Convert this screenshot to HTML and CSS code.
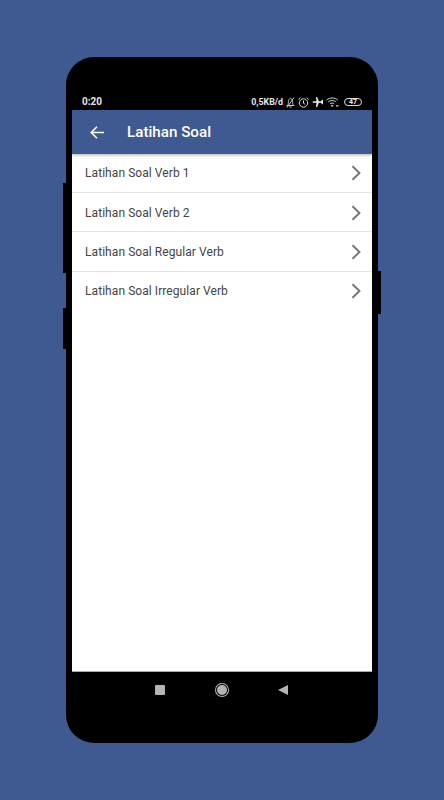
FILE: index.html
```html
<!DOCTYPE html>
<html>
<head>
	<title>Latihan Soal</title>
	<link rel="stylesheet" href="styles.css">
</head>
<body>
	<div class="phone">
		<span class="side-btn vol-up"></span>
		<span class="side-btn vol-down"></span>
		<span class="side-btn power"></span>

		<div class="status">
			<span class="clock">0:20</span>
			<div class="status-right">
				<span class="speed">0,5KB/d</span>
				<svg width="9" height="11" viewBox="0 0 9 11" fill="none" stroke="#ccc" stroke-width="1"><path d="M.5 8.500h8M1.600 8.500c.8-1 .7-2.500.8-3.800C2.500 3 3.300 1.500 4.500 1.500S6.500 3 6.600 4.700c.1 1.300 0 2.800.8 3.800M3.500 10h2M1 10.500 8 .5"/></svg>
				<svg width="11" height="11" viewBox="0 0 11 11" fill="none" stroke="#ddd" stroke-width="1"><circle cx="5.500" cy="6" r="4.200"/><path d="M5.500 3.500v2.800l1.600 1M.5 2.500 2.500.6M10.500 2.500 8.500.6"/></svg>
				<svg width="11" height="10" viewBox="0 0 11 10" fill="#eee"><path d="M0 5 1.500 4.300H4.500L4 0H5.200L6.800 4.300H9L10 2.800H11V7.200H10L9 5.700H6.800L5.200 10H4L4.500 5.700H1.500z"/></svg>
				<svg width="13" height="10" viewBox="0 0 13 10" fill="none" stroke="#ddd" stroke-width="1"><path d="M.6 3.200C3.800.2 8.600.2 11.800 3.200M2.300 5C4.500 3 7.900 3 10.100 5M4.100 6.800c1.300-1 2.900-1 4.200 0"/><path d="M5.200 8h2v1.500h-2zM10 8.200h2.400v1.300H10z" fill="#ddd" stroke="none"/></svg>
				<span class="battery">47</span>
			</div>
		</div>

		<div class="screen">
			<div class="appbar">
				<svg class="back" width="14" height="13" viewBox="0 0 14 13" fill="none" stroke="#fff" stroke-width="1.600"><path d="M14 6.500H1.500M7 .8 1.300 6.500 7 12.200"/></svg>
				<h1>Latihan Soal</h1>
			</div>
			<ul class="list">
				<li>Latihan Soal Verb 1<svg width="10" height="16" viewBox="0 0 10 16" fill="none" stroke="#757575" stroke-width="1.900"><path d="M1.500 1.200 8.500 8l-7 6.800"/></svg></li>
				<li>Latihan Soal Verb 2<svg width="10" height="16" viewBox="0 0 10 16" fill="none" stroke="#757575" stroke-width="1.900"><path d="M1.500 1.200 8.500 8l-7 6.800"/></svg></li>
				<li>Latihan Soal Regular Verb<svg width="10" height="16" viewBox="0 0 10 16" fill="none" stroke="#757575" stroke-width="1.900"><path d="M1.500 1.200 8.500 8l-7 6.800"/></svg></li>
				<li>Latihan Soal Irregular Verb<svg width="10" height="16" viewBox="0 0 10 16" fill="none" stroke="#757575" stroke-width="1.900"><path d="M1.500 1.200 8.500 8l-7 6.800"/></svg></li>
			</ul>
		</div>

		<div class="navbar">
			<span class="nav-square"></span>
			<span class="nav-home"></span>
			<span class="nav-back"></span>
		</div>
	</div>
</body>
</html>
```

FILE: styles.css
```css
body {
	margin: 0;
	height: 800px;
	box-sizing: border-box;
	padding: 57px 0 0 66px;
	overflow: hidden;
	background: #3f5a91;
	font-family: Roboto, sans-serif;
}

.phone {
	position: relative;
	box-sizing: border-box;
	width: 312px;
	height: 686px;
	padding: 0 6px;
	display: flex;
	flex-direction: column;
	background: #000;
	border-radius: 28px;
}

.side-btn {
	position: absolute;
	width: 3px;
	background: #000;
}

.vol-up {
	left: -3px;
	top: 126px;
	height: 90px;
}

.vol-down {
	left: -3px;
	top: 251px;
	height: 41px;
}

.power {
	right: -3px;
	top: 214px;
	height: 43px;
}

.status {
	height: 53px;
	padding: 0 10px 0 10px;
	box-sizing: border-box;
	display: flex;
	align-items: flex-end;
	justify-content: space-between;
	color: #e6e6e6;
	font-size: 10px;
	font-weight: 700;
}

.clock {
	line-height: 16px;
}

.status-right {
	display: flex;
	align-items: center;
	gap: 3px;
	height: 16px;
}

.speed {
	font-size: 8.8px;
}

.battery {
	box-sizing: border-box;
	width: 18px;
	height: 8px;
	margin-left: 2px;
	border: 1px solid #ddd;
	border-radius: 4px;
	font-size: 7px;
	line-height: 6px;
	text-align: center;
}

.screen {
	box-sizing: border-box;
	height: 562px;
	background: #fff;
	border-bottom: 1px solid #aaa;
	display: flex;
	flex-direction: column;
}

.appbar {
	height: 44px;
	flex: none;
	display: flex;
	align-items: center;
	background: #3f5a91;
	box-shadow: 0 1px 3px #0005;
	color: #fff;
}

.back {
	margin-left: 18px;
}

.appbar h1 {
	margin: 0 0 0 23px;
	font-size: 15.2px;
	font-weight: 500;
}

.list {
	margin: 0;
	padding: 0;
	list-style: none;
}

.list li {
	box-sizing: border-box;
	height: 39.2px;
	padding: 0.5px 11px 0 13px;
	display: flex;
	align-items: center;
	justify-content: space-between;
	border-bottom: 1px solid #e2e2e2;
	color: #444;
	font-size: 12px;
	letter-spacing: 0.07px;
}

.list li:last-child {
	border-bottom: 0;
}

.navbar {
	height: 36px;
	display: flex;
	align-items: center;
	padding-left: 83px;
}

.nav-square {
	width: 10px;
	height: 10px;
	background: #b4b4b4;
	border-radius: 1px;
}

.nav-home {
	width: 10px;
	height: 10px;
	margin-left: 52px;
	background: #b4b4b4;
	border-radius: 50%;
	box-shadow: 0 0 0 1px #000, 0 0 0 2px #b4b4b4;
}

.nav-back {
	width: 0;
	height: 0;
	margin-left: 51px;
	border-style: solid;
	border-width: 5px 10px 5px 0;
	border-color: transparent #b4b4b4 transparent transparent;
}
```
